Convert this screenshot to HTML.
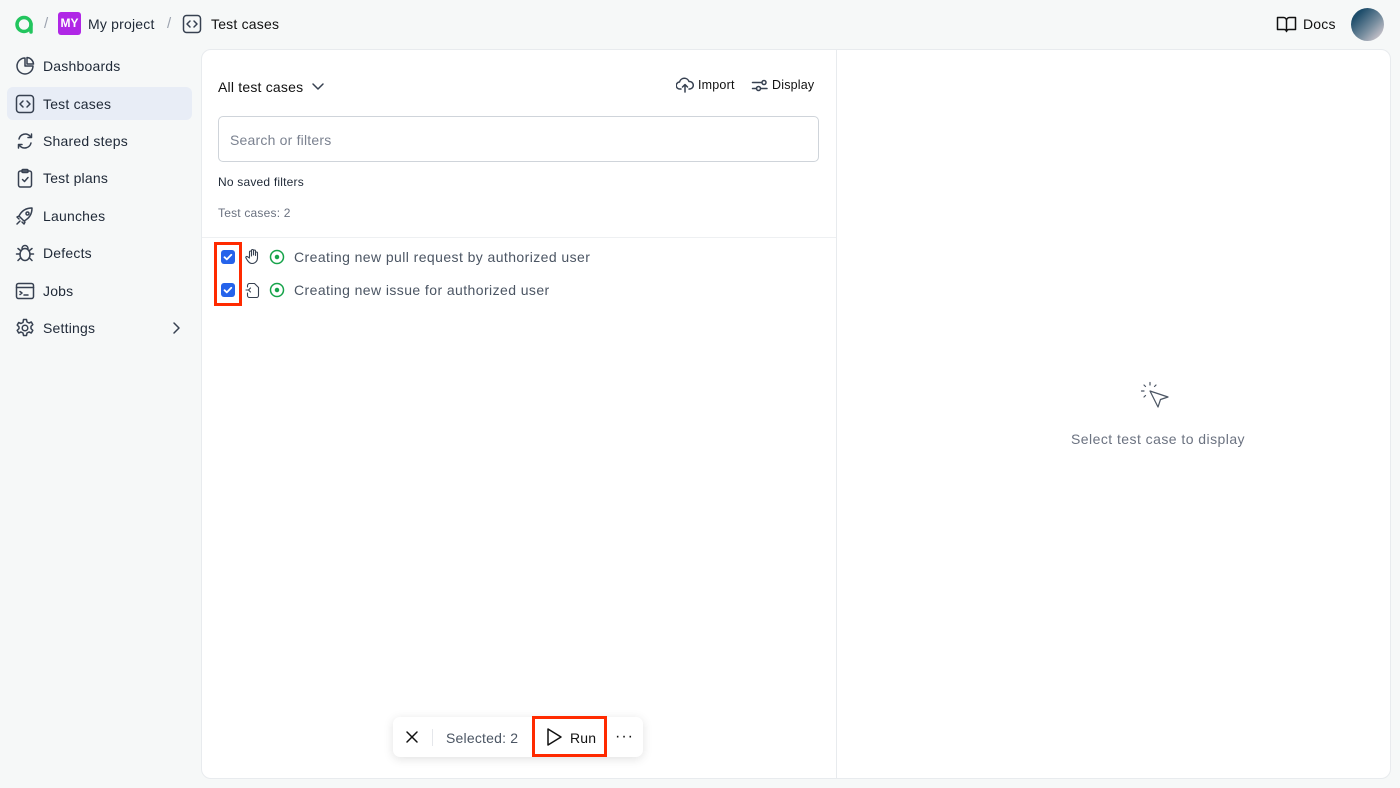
<!DOCTYPE html>
<html><head><style>
*{box-sizing:border-box;margin:0;padding:0}
body{width:1400px;height:788px;background:#f6f8f8;font-family:"Liberation Sans",sans-serif;color:#1f2937;position:relative;overflow:hidden;font-size:14px;letter-spacing:.2px}
.a{position:absolute}
svg{fill:none;stroke:#374151;stroke-width:1.5;stroke-linecap:round;stroke-linejoin:round}
.nav{position:absolute;left:7px;width:185px;height:33px;display:flex;align-items:center;padding-left:8px;font-size:14px;color:#1f2937}
.nav svg{width:20px;height:20px;margin-right:8px}
.cb{position:absolute;left:221px;width:14px;height:14px;background:#2563eb;border-radius:3px}
</style></head><body>
<svg class="a" style="left:14px;top:14px;width:21px;height:21px" viewBox="0 0 21 21"><circle cx="10" cy="10.5" r="7" stroke="#22c55e" stroke-width="3.5"/><path d="M17 10v8" stroke="#22c55e" stroke-width="3.5"/></svg>
<div class="a" style="left:44px;top:15px;color:#9ca3af;font-size:15px">/</div>
<div class="a" style="left:58px;top:12px;width:23px;height:23px;background:#b027e6;border-radius:3px;color:#fff;font-size:12px;font-weight:bold;text-align:center;line-height:23px;letter-spacing:0">MY</div>
<div class="a" style="left:88px;top:16px;font-size:14px;color:#1f2937">My project</div>
<div class="a" style="left:167px;top:15px;color:#9ca3af;font-size:15px">/</div>
<svg class="a" style="left:182px;top:14px;width:20px;height:20px" viewBox="0 0 20 20"><rect x="1.5" y="1.5" width="17" height="17" rx="3"/><path d="M8 7l-3 3 3 3M12 7l3 3-3 3"/></svg>
<div class="a" style="left:211px;top:16px;font-size:14px;color:#111">Test cases</div>
<svg class="a" style="left:1276px;top:15px;width:21px;height:18px" viewBox="0 0 21 18"><path d="M1.5 2.5h6a3 3 0 0 1 3 3v11a2.5 2.5 0 0 0-2.5-2H1.5zM19.5 2.5h-6a3 3 0 0 0-3 3v11a2.5 2.5 0 0 1 2.5-2h6.5z" stroke="#111"/></svg>
<div class="a" style="left:1303px;top:16px;font-size:14px;color:#111">Docs</div>
<div class="a" style="left:1351px;top:8px;width:33px;height:33px;border-radius:50%;background:linear-gradient(135deg,#1e4d6b 20%,#7a8fa0 60%,#e8d8dc)"></div>
<div class="nav" style="top:49px"><svg viewBox="0 0 20 20"><path d="M10 2a8 8 0 1 0 8 8h-8z"/><path d="M12 1.5a7 7 0 0 1 6.5 6.5H12z"/></svg>Dashboards</div>
<div class="nav" style="top:87px;background:#e8edf6;border-radius:6px"><svg viewBox="0 0 20 20"><rect x="1.5" y="1.5" width="17" height="17" rx="3"/><path d="M8 7l-3 3 3 3M12 7l3 3-3 3"/></svg>Test cases</div>
<div class="nav" style="top:124px"><svg viewBox="0 0 20 20"><path d="M4 8a6.5 6.5 0 0 1 11-3l1.5 1.5M16 12a6.5 6.5 0 0 1-11 3L3.5 13.5M16.5 3v3.5H13M3.5 17v-3.5H7"/></svg>Shared steps</div>
<div class="nav" style="top:161px"><svg viewBox="0 0 20 20"><rect x="3.5" y="3" width="13" height="16" rx="2"/><rect x="7" y="1.5" width="6" height="3" rx="1"/><path d="M7.5 11.5l2 2 3.5-4"/></svg>Test plans</div>
<div class="nav" style="top:199px"><svg viewBox="0 0 20 20"><path d="M7 13l-3-3c2-4 6-8 13-8 0 7-4 11-8 13zM4 10l-2 1 2 2M10 16l-1 2-2-2M5 15l-3 3"/><circle cx="12.5" cy="7.5" r="1.5"/></svg>Launches</div>
<div class="nav" style="top:236px"><svg viewBox="0 0 20 20"><ellipse cx="10" cy="11.5" rx="5" ry="6"/><path d="M7 5.5a3 3 0 0 1 6 0M5 11H1.5M18.5 11H15M5.5 7.5L3 5.5M14.5 7.5l2.5-2M5.5 15l-2.5 2.5M14.5 15l2.5 2.5"/></svg>Defects</div>
<div class="nav" style="top:274px"><svg viewBox="0 0 20 20"><rect x="1.5" y="2.5" width="17" height="15" rx="2"/><path d="M1.5 6.5h17M5 10.5l2 1.5-2 1.5M9 14h4"/></svg>Jobs</div>
<div class="nav" style="top:311px"><svg viewBox="0 0 20 20"><circle cx="10" cy="10" r="2.8"/><path d="M8.5 1.5h3l.5 2.5 2 1 2.3-1 1.5 2.6-1.8 1.8v2.2l1.8 1.8-1.5 2.6-2.3-1-2 1-.5 2.5h-3l-.5-2.5-2-1-2.3 1-1.5-2.6 1.8-1.8V8.9L2.2 7.1l1.5-2.6 2.3 1 2-1z"/></svg>Settings</div>
<svg class="a" style="left:170px;top:321px;width:12px;height:14px" viewBox="0 0 12 14"><path d="M4 2l5 5-5 5"/></svg>
<div class="a" style="left:201px;top:49px;width:1190px;height:730px;background:#fff;border:1px solid #e8ebee;border-radius:10px"></div>
<div class="a" style="left:836px;top:50px;width:1px;height:728px;background:#e8ebee"></div>
<div class="a" style="left:218px;top:79px;font-size:14px;color:#111">All test cases</div>
<svg class="a" style="left:311px;top:81px;width:14px;height:12px" viewBox="0 0 14 12"><path d="M2 3l5 5 5-5"/></svg>
<svg class="a" style="left:676px;top:77px;width:18px;height:16px" viewBox="0 0 18 16"><path d="M5 12H4a3.5 3.5 0 0 1-.5-7A5 5 0 0 1 13 4.5a3.5 3.5 0 0 1 1 7.5h-1M9 8v7M6.5 10L9 7.5l2.5 2.5"/></svg>
<div class="a" style="left:698px;top:78px;font-size:12.5px;color:#111">Import</div>
<svg class="a" style="left:751px;top:78px;width:17px;height:15px" viewBox="0 0 17 15"><path d="M1.5 4.5h9M1.5 10.5h4M10 10.5h6"/><circle cx="13" cy="4.5" r="2"/><circle cx="7.5" cy="10.5" r="2"/></svg>
<div class="a" style="left:772px;top:78px;font-size:12.5px;color:#111">Display</div>
<div class="a" style="left:218px;top:116px;width:601px;height:46px;border:1px solid #cfd4da;border-radius:5px;padding:15px 11px;font-size:14px;color:#7b8290">Search or filters</div>
<div class="a" style="left:218px;top:175px;font-size:12px;color:#1f2937">No saved filters</div>
<div class="a" style="left:218px;top:206px;font-size:12px;color:#6b7280">Test cases: 2</div>
<div class="a" style="left:202px;top:237px;width:634px;height:1px;background:#eef0f2"></div>
<div class="a" style="left:214px;top:242px;width:28px;height:64px;border:3px solid #ff2a00"></div>
<div class="cb" style="top:250px"><svg style="stroke:#fff;stroke-width:1.8;width:14px;height:14px" viewBox="0 0 14 14"><path d="M3.5 7.2l2.3 2.2 4.5-4.6"/></svg></div>
<div class="cb" style="top:283px"><svg style="stroke:#fff;stroke-width:1.8;width:14px;height:14px" viewBox="0 0 14 14"><path d="M3.5 7.2l2.3 2.2 4.5-4.6"/></svg></div>
<svg class="a" style="left:245px;top:248px;width:16px;height:17px;stroke-width:1.1" viewBox="0 0 16 17"><path d="M4.5 9V4a1 1 0 0 1 2 0v4M6.5 7V2.5a1 1 0 0 1 2 0V7M8.5 7V3a1 1 0 0 1 2 0v4.5M10.5 7.5V5a1 1 0 0 1 2 0v5a5.5 5.5 0 0 1-5.5 5.5c-2 0-3-1-4.5-3L1 10a1 1 0 0 1 1.5-1.3L4.5 10"/></svg>
<svg class="a" style="left:245px;top:282px;width:16px;height:16px;stroke-width:1.1" viewBox="0 0 16 16"><path d="M2.5 5V3.5a2 2 0 0 1 2-2h5l4 4v8a2 2 0 0 1-2 2h-7a2 2 0 0 1-2-2V11M5.5 6L3.5 8l2 2M1 8h2"/></svg>
<svg class="a" style="left:269px;top:249px;width:16px;height:16px;stroke:#16a34a" viewBox="0 0 16 16"><circle cx="8" cy="8" r="6.5"/><circle cx="8" cy="8" r="1.5" fill="#16a34a"/></svg>
<svg class="a" style="left:269px;top:282px;width:16px;height:16px;stroke:#16a34a" viewBox="0 0 16 16"><circle cx="8" cy="8" r="6.5"/><circle cx="8" cy="8" r="1.5" fill="#16a34a"/></svg>
<div class="a" style="left:294px;top:249px;font-size:14px;color:#4b5563;letter-spacing:.42px">Creating new pull request by authorized user</div>
<div class="a" style="left:294px;top:282px;font-size:14px;color:#4b5563;letter-spacing:.42px">Creating new issue for authorized user</div>
<svg class="a" style="left:1140px;top:381px;width:30px;height:30px;stroke:#4b5563;stroke-width:1.2" viewBox="0 0 30 30"><path d="M10 10l18 6-7.5 2.5L18 26z"/><path d="M10 1.5v2.5M4 4l1.5 1.5M16 4l-1.5 1.5M1.5 10H4M4 16l1.5-1.5"/></svg>
<div class="a" style="left:1071px;top:431px;font-size:14px;color:#6b7280;letter-spacing:.45px">Select test case to display</div>
<div class="a" style="left:393px;top:717px;width:250px;height:40px;background:#fff;border-radius:7px;box-shadow:0 2px 10px rgba(0,0,0,.12)"></div>
<svg class="a" style="left:404px;top:729px;width:16px;height:16px;stroke:#111" viewBox="0 0 16 16"><path d="M3 3l10 10M13 3L3 13"/></svg>
<div class="a" style="left:432px;top:729px;width:1px;height:17px;background:#e5e7eb"></div>
<div class="a" style="left:446px;top:730px;font-size:14px;color:#4b5563">Selected: 2</div>
<div class="a" style="left:532px;top:716px;width:75px;height:41px;border:3px solid #ff2a00"></div>
<svg class="a" style="left:545px;top:727px;width:18px;height:20px;stroke:#111" viewBox="0 0 18 20"><path d="M3 2l13 8-13 8z"/></svg>
<div class="a" style="left:570px;top:730px;font-size:14px;color:#111">Run</div>
<div class="a" style="left:615px;top:728px;font-size:16px;color:#111;letter-spacing:1px">···</div>
</body></html>
